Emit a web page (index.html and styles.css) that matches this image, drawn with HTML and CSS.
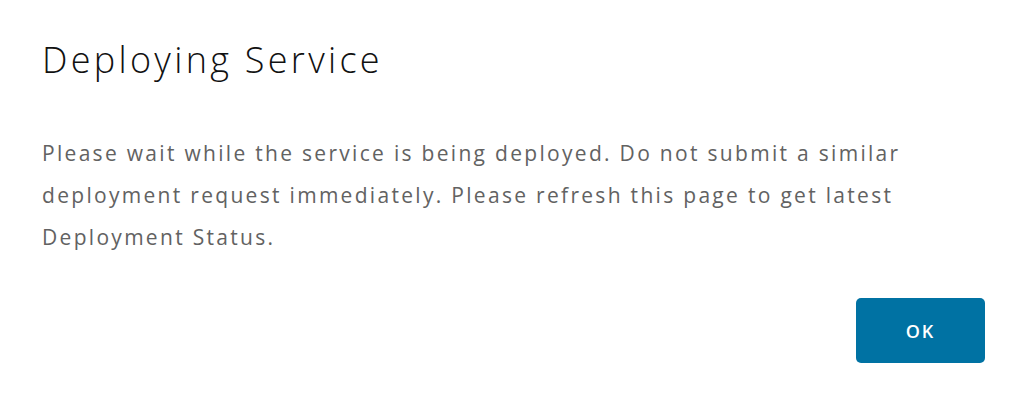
FILE: index.html
```html
<!DOCTYPE html>
<html lang="en">
<head>
  <meta charset="UTF-8">
  <meta name="viewport" content="width=device-width, initial-scale=1.0">
  <title>Deploying Service</title>
  <link rel="stylesheet" href="styles.css">
</head>
<body>

<div class="modal">
  <h1 class="modal-title">Deploying Service</h1>
  <p class="modal-body">Please wait while the service is being deployed. Do not submit a similar deployment request immediately. Please refresh this page to get latest Deployment Status.</p>
  <div class="modal-footer">
    <button class="btn-primary">OK</button>
  </div>
</div>

</body>
</html>
```

FILE: styles.css
```css
body {
  margin: 0;
  background: #fff;
  font-family: "Open Sans", Lato, sans-serif;
}
.modal {
  padding: 36px 38px 0 42px;
}
.modal-title {
  margin: 0;
  font-size: 36px;
  font-weight: 300;
  line-height: 48px;
  color: #111;
  letter-spacing: 3.3px;
}
.modal-body {
  margin: 48px 0 0 0;
  width: 900px;
  font-size: 21px;
  line-height: 42px;
  color: #626262;
  letter-spacing: 2.3px;
}
.modal-footer {
  display: flex;
  justify-content: flex-end;
  margin-top: 40px;
}
.btn-primary {
  width: 129px;
  height: 65px;
  border: none;
  border-radius: 5px;
  background-color: #0072a3;
  color: #fff;
  font-family: inherit;
  font-size: 18px;
  font-weight: 600;
  letter-spacing: 2px;
}
```
